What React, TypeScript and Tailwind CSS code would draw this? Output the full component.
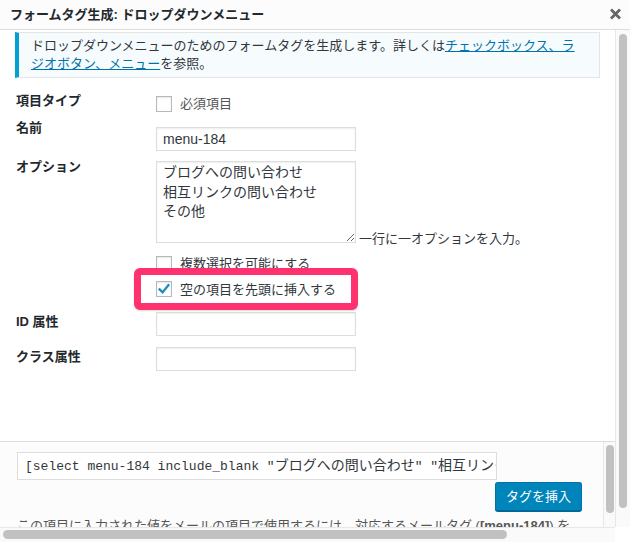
const sans = "font-['Liberation_Sans','Noto_Sans_CJK_JP',sans-serif]";
const mono = "font-['Liberation_Mono','Noto_Sans_CJK_JP',monospace]";

const Checkbox = ({ checked = false }: { checked?: boolean }) => (
  <span className="flex h-4 w-4 shrink-0 items-center justify-center border border-[#b4b9be] bg-white shadow-[inset_0_1px_2px_rgba(0,0,0,0.1)]">
    {checked && (
      <svg width="14" height="14" viewBox="0 0 14 14" fill="none">
        <path
          d="M2.6 7.4 L5.6 10.4 L11.4 3.2"
          stroke="#1e8cbe"
          strokeWidth="2.3"
          strokeLinecap="square"
        />
      </svg>
    )}
  </span>
);

const FieldLabel = ({ children, className = "" }: { children: React.ReactNode; className?: string }) => (
  <div className={`w-[140px] shrink-0 text-[13px] font-bold leading-[18px] text-[#23282d] ${className}`}>
    {children}
  </div>
);

const TextInput = ({ value = "" }: { value?: string }) => (
  <input
    readOnly
    defaultValue={value}
    className={`h-[24px] w-[200px] border border-[#ddd] bg-white px-[6px] text-[14px] leading-[22px] text-[#32373c] shadow-[inset_0_1px_2px_rgba(0,0,0,0.07)] outline-none ${sans}`}
  />
);

export default function App() {
  return (
    <div className={`flex h-[542px] w-[630px] flex-col overflow-hidden bg-white text-[13px] text-[#32373c] ${sans}`}>
      <header className="flex h-[30px] shrink-0 items-center justify-between border-b border-[#ddd] bg-[#fcfcfc] pl-[10px] pr-[8px]">
        <h1 className="text-[13px] font-semibold leading-[29px] text-[#23282d]">
          フォームタグ生成: ドロップダウンメニュー
        </h1>
        <svg width="13" height="12" viewBox="0 0 13 12" className="mb-[2px]">
          <path d="M2 1.5 L11 10.5 M11 1.5 L2 10.5" stroke="#666" strokeWidth="2.8" />
        </svg>
      </header>

      <div className="flex h-[497px] shrink-0">
        <div className="flex w-[615px] flex-col">
          {/* form */}
          <div className="h-[411px] shrink-0 overflow-hidden">
            <div className="mx-[15px] mt-[2px] border border-l-4 border-[#e5e5e5] border-l-[#00a0d2] bg-[#f6fbfe] py-[4px] pl-[12px] pr-[10px] leading-[18px] text-[#32373c]">
              ドロップダウンメニューのためのフォームタグを生成します。詳しくは
              <a className="text-[#0073aa] underline">
                チェックボックス、ラ
                <br />
                ジオボタン、メニュー
              </a>
              を参照。
            </div>

            <div className="mt-[14px] pl-[16px]">
              <div className="flex h-[27px]">
                <FieldLabel>項目タイプ</FieldLabel>
                <div className="mt-[3px] flex h-[18px] items-center gap-[8px] text-[#555]">
                  <Checkbox />
                  <span>必須項目</span>
                </div>
              </div>

              <div className="flex h-[39px]">
                <FieldLabel>名前</FieldLabel>
                <div className="pt-[8px]">
                  <TextInput value="menu-184" />
                </div>
              </div>

              <div className="flex">
                <FieldLabel>オプション</FieldLabel>
                <div className="pt-[3px]">
                  <div className="flex items-end">
                    <textarea
                      readOnly
                      defaultValue={"ブログへの問い合わせ\n相互リンクの問い合わせ\nその他"}
                      className={`block h-[82px] w-[200px] border border-[#ddd] bg-white px-[6px] pt-[1px] text-[14px] leading-[19.6px] text-[#32373c] shadow-[inset_0_1px_2px_rgba(0,0,0,0.07)] outline-none ${sans}`}
                    />
                    <span className="mb-[-5px] ml-[3px] whitespace-nowrap leading-[18px] text-[#32373c]">
                      一行に一オプションを入力。
                    </span>
                  </div>
                  <div className="mt-[12px] flex h-[18px] items-center gap-[8px] text-[#32373c]">
                    <Checkbox />
                    <span>複数選択を可能にする</span>
                  </div>
                  <div className="relative ml-[-22px] mt-[-5px] flex h-[42px] w-[224px] items-center gap-[8px] rounded-[6px] border-[7px] border-[#ff3270] bg-white pl-[15px] text-[#32373c] shadow-[0_1px_2px_rgba(0,0,0,0.15)]">
                    <Checkbox checked />
                    <span className="mt-[1px]">空の項目を先頭に挿入する</span>
                  </div>
                </div>
              </div>

              <div className="mt-[2px] flex">
                <FieldLabel className="pt-[1px]">ID 属性</FieldLabel>
                <TextInput />
              </div>

              <div className="mt-[11px] flex">
                <FieldLabel className="pt-[1px]">クラス属性</FieldLabel>
                <TextInput />
              </div>
            </div>
          </div>

          {/* insert box */}
          <div className="flex h-[86px] shrink-0 border-t border-[#ddd] bg-[#fcfcfc]">
            <div className="min-w-0 flex-1 overflow-hidden pl-[17px] pt-[10px]">
              <div
                className={`h-[28px] w-[480px] overflow-hidden whitespace-nowrap border border-[#ddd] bg-white px-[7px] text-[13px] leading-[26px] text-[#32373c] ${mono}`}
              >
                [select menu-184 include_blank "<span className="text-[14px]">ブログへの問い合わせ</span>" "
                <span className="text-[14px]">相互リンクの問い合わせ</span>" "
                <span className="text-[14px]">その他</span>"]
              </div>
              <div className="mt-[2px] flex justify-end pr-[21px]">
                <button className="h-[29px] w-[87px] rounded-[3px] border border-[#0073aa] border-b-[#006799] bg-[#0085ba] text-[13px] leading-[26px] text-white shadow-[0_1px_0_#006799]">
                  タグを挿入
                </button>
              </div>
              <p className="mt-[6px] whitespace-nowrap leading-[18px] text-[#555]">
                この項目に入力された値をメールの項目で使用するには、対応するメールタグ (<strong>[menu-184]</strong>) を
              </p>
            </div>
            <div className="w-[12px] shrink-0 border-l border-[#e8e8e8] bg-[#fafafa] pl-[2px] pt-[3px]">
              <div className="h-[68px] w-[8px] rounded-full bg-[#c1c1c1]" />
            </div>
          </div>
        </div>

        <div className="w-[15px] shrink-0 border-l border-[#e8e8e8] bg-[#fafafa] pl-[3px] pt-[4px]">
          <div className="h-[474px] w-[8px] rounded-full bg-[#c1c1c1]" />
        </div>
      </div>

      <div className="flex h-[15px] shrink-0">
        <div className="w-[615px] border-t border-[#e8e8e8] bg-[#fafafa] pl-[3px] pt-[2px]">
          <div className="h-[9px] w-[504px] rounded-full bg-[#c1c1c1]" />
        </div>
        <div className="w-[15px] bg-white" />
      </div>
    </div>
  );
}
